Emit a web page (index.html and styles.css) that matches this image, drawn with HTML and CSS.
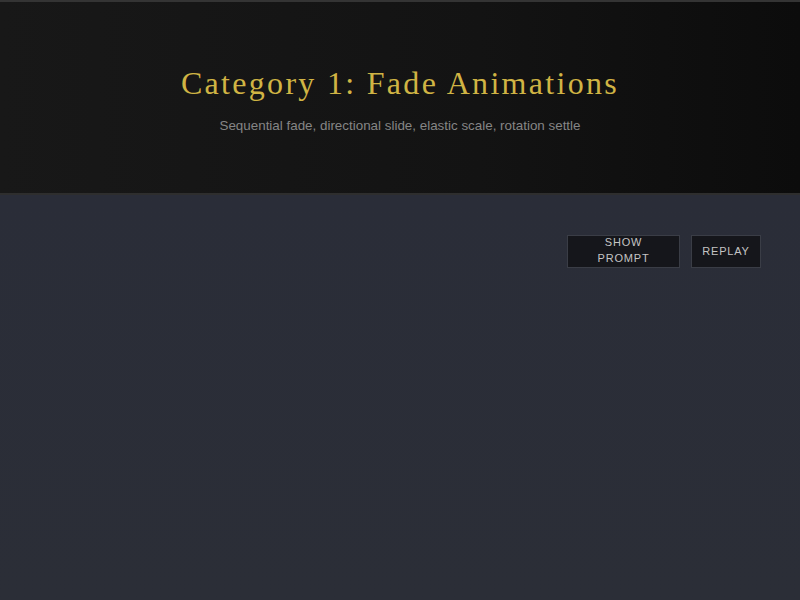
FILE: index.html
```html
<!DOCTYPE html>
<html>
<head>
<meta charset="utf-8">
<link rel="stylesheet" href="styles.css">
</head>
<body>
<header class="hero">
  <h1 class="title">Category 1: Fade Animations</h1>
  <p class="subtitle">Sequential fade, directional slide, elastic scale, rotation settle</p>
</header>
<main class="stage">
  <div class="controls">
    <button class="btn btn-prompt"><span class="btn-label">SHOW<br>PROMPT</span></button>
    <button class="btn btn-replay">REPLAY</button>
  </div>
</main>
</body>
</html>
```
FILE: styles.css
```css
html, body {
  margin: 0;
  padding: 0;
  height: 100%;
}
body {
  background: #2a2d37;
  font-family: "Liberation Sans", Arial, sans-serif;
  overflow: hidden;
}
.hero {
  height: 191px;
  border-top: 2px solid #343434;
  border-bottom: 2px solid #2e2e2e;
  background: linear-gradient(90deg, #181818 0%, #131313 60%, #0c0c0c 100%);
  box-sizing: content-box;
  display: flex;
  flex-direction: column;
  align-items: center;
}
.title {
  margin: 62px 0 0;
  font-family: "Liberation Serif", "Times New Roman", serif;
  font-weight: normal;
  font-size: 32px;
  letter-spacing: 2.3px;
  color: #d0b444;
  line-height: 38px;
}
.subtitle {
  margin: 16px 0 0;
  font-size: 13.4px;
  color: #858585;
  line-height: 16px;
}
.stage {
  height: 406px;
  background: linear-gradient(180deg, #2a2d38 0%, #2b2e37 100%);
  display: flex;
  justify-content: flex-end;
  align-items: flex-start;
  padding: 40px 39px 0 0;
  box-sizing: border-box;
}
.controls {
  display: flex;
  gap: 11px;
}
.btn {
  height: 33px;
  background: #15161b;
  border: 1px solid #3a3d46;
  color: #c4c4c4;
  font-family: "Liberation Sans", Arial, sans-serif;
  font-size: 11px;
  letter-spacing: 0.8px;
  line-height: 16px;
  padding: 0 0 2px;
  text-align: center;
}
.btn-label {
  display: block;
  margin-top: -2px;
}
.btn-prompt {
  width: 113px;
}
.btn-replay {
  width: 70px;
}
```
